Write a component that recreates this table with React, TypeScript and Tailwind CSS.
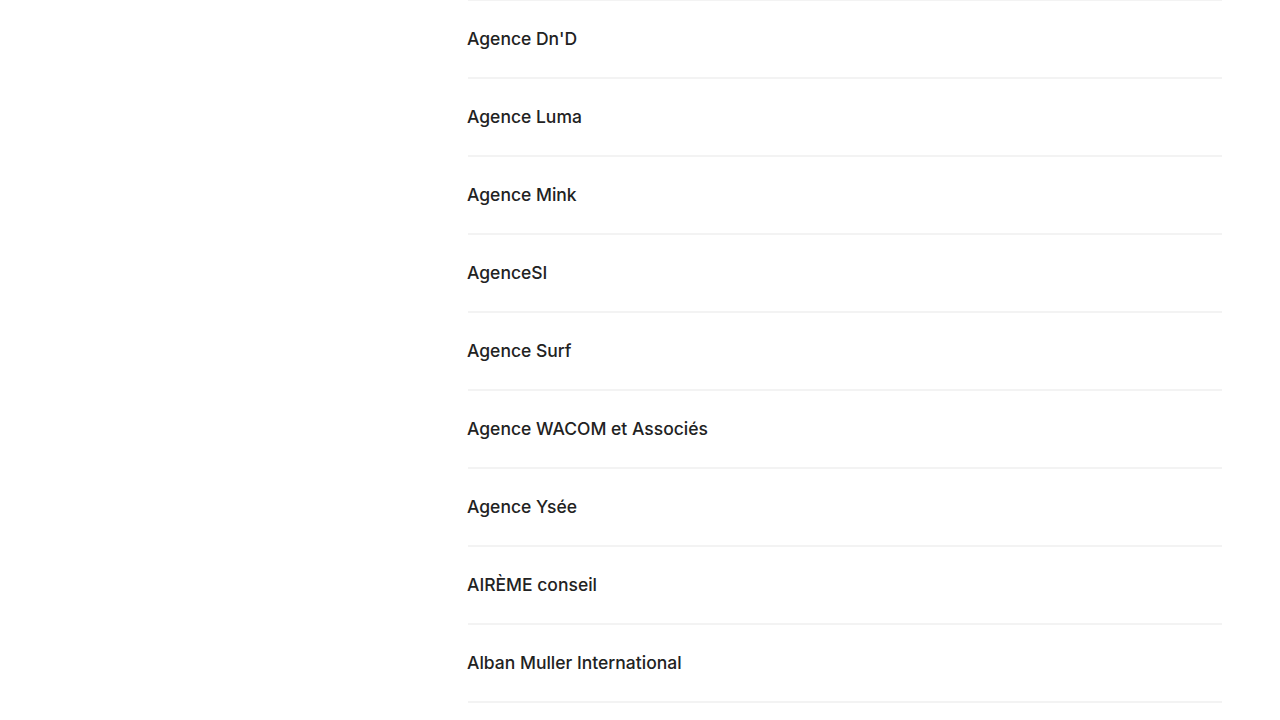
const agencies = [
  "Agence Dn'D",
  "Agence Luma",
  "Agence Mink",
  "AgenceSI",
  "Agence Surf",
  "Agence WACOM et Associés",
  "Agence Ysée",
  "AIRÈME conseil",
  "Alban Muller International",
];

export default function App() {
  return (
    <div className="min-h-[720px] bg-white font-['Inter',sans-serif] text-[#222222] overflow-hidden">
      <div className="ml-[468px] w-[754px] -mt-[1px]">
        {agencies.map((name) => (
          <div
            key={name}
            className="h-[78px] border-t-2 border-[#f3f3f3] flex items-center pt-[1px]"
          >
            <span className="-ml-[1px] text-[17.5px] font-medium tracking-[0px]">{name}</span>
          </div>
        ))}
        <div className="border-t-2 border-[#f3f3f3]" />
      </div>
    </div>
  );
}
